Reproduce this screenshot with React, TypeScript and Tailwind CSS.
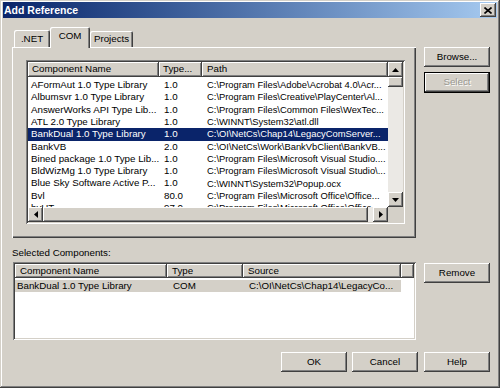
import React from 'react';

const raised =
  'shadow-[inset_-1px_-1px_#404040,inset_1px_1px_#ffffff,inset_-2px_-2px_#808080,inset_2px_2px_#d4d0c8]';
const sunken =
  'shadow-[inset_1px_1px_#808080,inset_-1px_-1px_#ffffff,inset_2px_2px_#404040,inset_-2px_-2px_#d4d0c8]';
const headerCell =
  'shadow-[inset_-1px_-1px_#404040,inset_1px_1px_#ffffff,inset_-2px_-2px_#808080]';

type Row = { name: string; type: string; path: string; selected?: boolean };

const rows: Row[] = [
  { name: 'AFormAut 1.0 Type Library', type: '1.0', path: 'C:\\Program Files\\Adobe\\Acrobat 4.0\\Acr...' },
  { name: 'Albumsvr 1.0 Type Library', type: '1.0', path: 'C:\\Program Files\\Creative\\PlayCenter\\Al...' },
  { name: 'AnswerWorks API Type Lib...', type: '1.0', path: 'C:\\Program Files\\Common Files\\WexTec...' },
  { name: 'ATL 2.0 Type Library', type: '1.0', path: 'C:\\WINNT\\System32\\atl.dll' },
  { name: 'BankDual 1.0 Type Library', type: '1.0', path: 'C:\\OI\\NetCs\\Chap14\\LegacyComServer...', selected: true },
  { name: 'BankVB', type: '2.0', path: 'C:\\OI\\NetCs\\Work\\BankVbClient\\BankVB...' },
  { name: 'Bined package 1.0 Type Lib...', type: '1.0', path: 'C:\\Program Files\\Microsoft Visual Studio....' },
  { name: 'BldWizMg 1.0 Type Library', type: '1.0', path: 'C:\\Program Files\\Microsoft Visual Studio\\...' },
  { name: 'Blue Sky Software Active P...', type: '1.0', path: 'C:\\WINNT\\System32\\Popup.ocx' },
  { name: 'Bvl', type: '80.0', path: 'C:\\Program Files\\Microsoft Office\\Office...' },
  { name: 'bvUT', type: '97.0', path: 'C:\\Program Files\\Microsoft Office\\Office...' },
];

const Arrow = ({ dir }: { dir: 'up' | 'down' | 'left' | 'right' }) => {
  const pts = {
    up: '3.5,0 7,4 0,4',
    down: '0,0 7,0 3.5,4',
    left: '4,0 4,7 0,3.5',
    right: '0,0 4,3.5 0,7',
  }[dir];
  const vertical = dir === 'up' || dir === 'down';
  return (
    <svg width={vertical ? 7 : 4} height={vertical ? 4 : 7} viewBox={vertical ? '0 0 7 4' : '0 0 4 7'}>
      <polygon points={pts} fill="#000" />
    </svg>
  );
};

const ScrollButton = ({ dir }: { dir: 'up' | 'down' | 'left' | 'right' }) => (
  <div className={`w-[15px] h-[15px] shrink-0 bg-[#d4d0c8] flex items-center justify-center ${raised}`}>
    <Arrow dir={dir} />
  </div>
);

const Button = ({ label, className = '' }: { label: string; className?: string }) => (
  <div
    className={`w-[66px] h-[20px] bg-[#d4d0c8] flex items-center justify-center text-[9.75px] text-black ${raised} ${className}`}
  >
    {label}
  </div>
);

export default function App() {
  return (
    <div className="w-[500px] h-[388px] bg-[#d4d0c8] flex flex-col font-['Liberation_Sans',Arial,sans-serif] text-black shadow-[inset_-1px_-1px_#404040,inset_1px_1px_#d4d0c8,inset_-2px_-2px_#808080,inset_2px_2px_#ffffff] overflow-hidden">
      {/* Title bar */}
      <div className="mt-[2px] mx-[3px] h-[16px] bg-linear-to-r from-[#0a246a] to-[#a6caf0] flex items-center justify-between">
        <span className="pl-[1px] text-white font-bold text-[10.5px] leading-none">Add Reference</span>
        <div className={`mr-[1px] w-[16px] h-[14px] bg-[#d4d0c8] flex items-center justify-center ${raised}`}>
          <svg width="8" height="7" viewBox="0 0 8 7">
            <path d="M0.5 0.5 L7.5 6.5 M7.5 0.5 L0.5 6.5" stroke="#000" strokeWidth="1.6" />
          </svg>
        </div>
      </div>

      {/* Tabs + list */}
      <div className="mt-[9px] pl-[12px] flex gap-[8px]">
        <div className="w-[404px] flex flex-col">
          <div className="h-[20px] pl-[2px] flex items-end text-[9.75px]">
            <div className="w-[36px] h-[17px] flex items-center justify-center pt-[1px] shadow-[inset_1px_1px_#ffffff,inset_-1px_0_#404040,inset_-2px_0_#808080] rounded-t-[2px]">
              .NET
            </div>
            <div className="relative top-[1px] z-10 w-[40px] h-[21px] bg-[#d4d0c8] flex items-center justify-center pb-[3px] shadow-[inset_1px_1px_#ffffff,inset_-1px_0_#404040,inset_-2px_0_#808080] rounded-t-[2px]">
              COM
            </div>
            <div className="w-[43px] h-[16px] flex items-center justify-center pt-[1px] shadow-[inset_1px_1px_#ffffff,inset_-1px_0_#404040,inset_-2px_0_#808080] rounded-t-[2px]">
              Projects
            </div>
          </div>
          <div className="h-[191px] pl-[14px] pt-[13px] shadow-[inset_1px_1px_#ffffff,inset_-1px_-1px_#404040,inset_-2px_-2px_#808080]">
            <div className={`w-[379px] h-[164px] bg-white p-[2px] ${sunken}`}>
              <div className="flex h-[145px]">
                <div className="w-[360px] overflow-hidden text-[9.75px]">
                  <div className="flex h-[15px] bg-[#d4d0c8]">
                    <div className={`w-[131px] pl-[4px] flex items-center ${headerCell}`}>Component Name</div>
                    <div className={`w-[43px] pl-[4px] flex items-center ${headerCell}`}>Type...</div>
                    <div className={`w-[186px] pl-[5px] flex items-center ${headerCell}`}>Path</div>
                  </div>
                  <div className="pt-[2px]">
                    {rows.map((r) => (
                      <div
                        key={r.name}
                        className={`flex h-[12.33px] items-center whitespace-nowrap ${
                          r.selected ? 'bg-[#0a246a] text-white' : ''
                        }`}
                      >
                        <div className="w-[131px] pl-[3px]">{r.name}</div>
                        <div className="w-[43px] pl-[5px]">{r.type}</div>
                        <div className="w-[186px] pl-[5px] text-[9.4px]">{r.path}</div>
                      </div>
                    ))}
                  </div>
                </div>
                <div className="w-[15px] flex flex-col bg-[#ebe9e5]">
                  <ScrollButton dir="up" />
                  <div className={`h-[10px] bg-[#d4d0c8] ${raised}`} />
                  <div className="flex-1" />
                  <ScrollButton dir="down" />
                </div>
              </div>
              <div className="flex h-[15px]">
                <div className="w-[360px] flex bg-[#ebe9e5]">
                  <ScrollButton dir="left" />
                  <div className={`w-[325px] bg-[#d4d0c8] ${raised}`} />
                  <div className="flex-1" />
                  <ScrollButton dir="right" />
                </div>
                <div className="w-[15px] bg-[#d4d0c8]" />
              </div>
            </div>
          </div>
        </div>
        <div className="w-[66px] pt-[20px] flex flex-col">
          <Button label="Browse..." />
          <div className="mt-[5px] w-[66px] h-[21px] bg-black p-[1px]">
            <div
              className={`w-full h-full bg-[#d4d0c8] flex items-center justify-center text-[9.75px] text-[#9a9890] [text-shadow:1px_1px_0_#ffffff] ${raised}`}
            >
              Select
            </div>
          </div>
        </div>
      </div>

      {/* Selected components */}
      <div className="mt-[9px] pl-[12px] h-[12px] text-[9.75px] leading-[12px]">Selected Components:</div>
      <div className="mt-[3px] pl-[13px] flex">
        <div className={`w-[403px] h-[78px] bg-white p-[2px] ${sunken}`}>
          <div className="flex h-[14px] bg-[#d4d0c8] text-[9.75px]">
            <div className={`w-[152px] pl-[5px] flex items-center ${headerCell}`}>Component Name</div>
            <div className={`w-[76px] pl-[5px] flex items-center ${headerCell}`}>Type</div>
            <div className={`w-[158px] pl-[5px] flex items-center ${headerCell}`}>Source</div>
            <div className={`w-[13px] ${headerCell}`} />
          </div>
          <div className="pt-[2px] text-[9.75px]">
            <div className="flex w-[386px] h-[12px] items-center bg-[#d4d0c8] whitespace-nowrap">
              <div className="w-[152px] pl-[2px]">BankDual 1.0 Type Library</div>
              <div className="w-[76px] pl-[6px]">COM</div>
              <div className="w-[158px] pl-[6px]">C:\OI\NetCs\Chap14\LegacyCo...</div>
            </div>
          </div>
        </div>
        <div className="ml-[8px] pt-[1px]">
          <Button label="Remove" />
        </div>
      </div>

      {/* Dialog buttons */}
      <div className="mt-[12px] pr-[10px] flex justify-end">
        <Button label="OK" />
        <Button label="Cancel" className="ml-[5px]" />
        <Button label="Help" className="ml-[6px]" />
      </div>
    </div>
  );
}
